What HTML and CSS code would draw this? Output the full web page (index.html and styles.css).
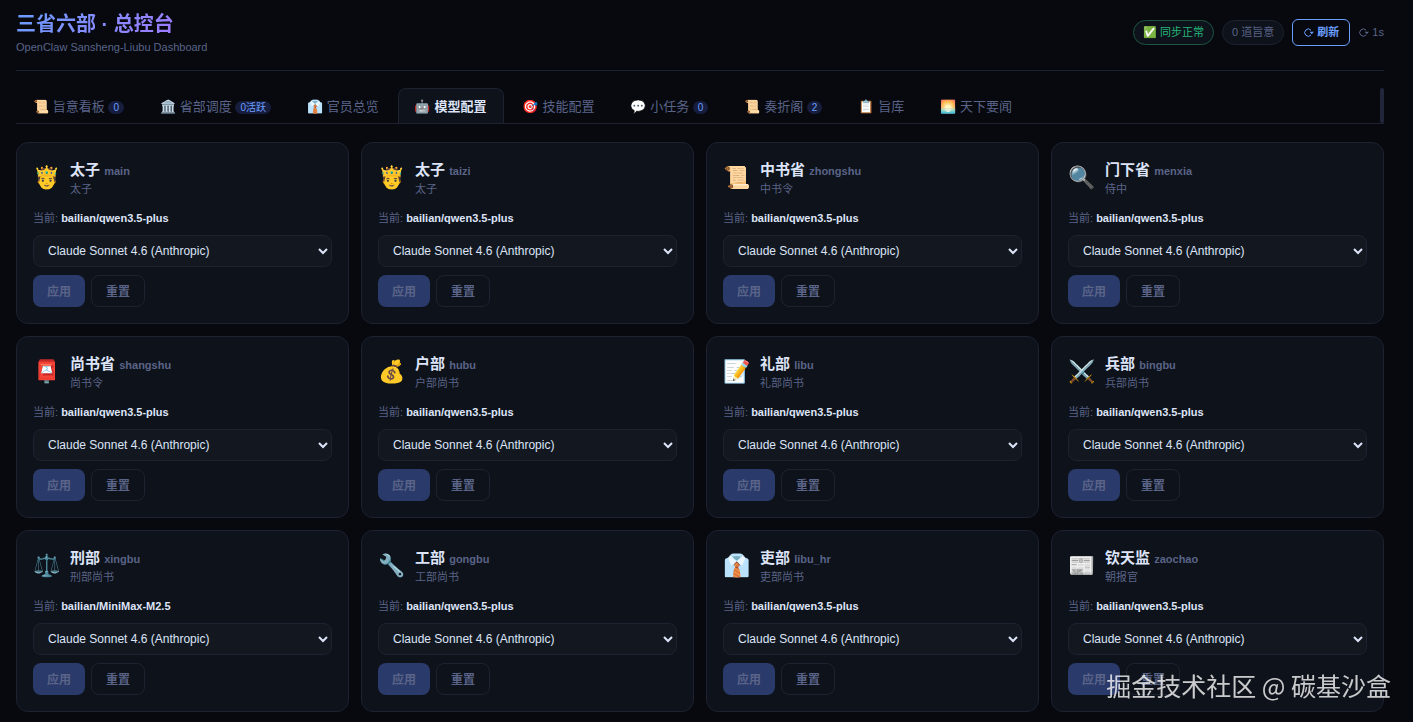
FILE: index.html
```html
<!DOCTYPE html>
<html lang="zh-CN">
<head>
  <meta charset="UTF-8">
  <meta name="viewport" content="width=device-width, initial-scale=1.0">
  <title>三省六部 · 总控台</title>
  <link rel="stylesheet" href="styles.css">
</head>
<body>
  <div class="wrap">
    <header class="hdr">
      <div>
        <h1 class="logo">三省六部 · 总控台</h1>
        <div class="sub-text">OpenClaw Sansheng-Liubu Dashboard</div>
      </div>
      <div class="hdr-r">
        <span class="chip ok">✅ 同步正常</span>
        <span class="chip">0 道旨意</span>
        <button class="btn-refresh" type="button"><svg class="spin" viewBox="0 0 11 11" aria-hidden="true"><path d="M8 3.2A3.6 3.6 0 1 0 8 8"/><path class="tip" d="M6.6 4.8h4.2L8.8 7.2z"/></svg> 刷新</button>
        <span class="countdown"><svg class="spin" viewBox="0 0 11 11" aria-hidden="true"><path d="M8 3.2A3.6 3.6 0 1 0 8 8"/><path class="tip" d="M6.6 4.8h4.2L8.8 7.2z"/></svg> 1s</span>
      </div>
    </header>

    <nav class="tabs">
      <button class="tab" type="button">📜 旨意看板 <span class="tbadge">0</span></button>
      <button class="tab" type="button">🏛️ 省部调度 <span class="tbadge">0活跃</span></button>
      <button class="tab" type="button">👔 官员总览</button>
      <button class="tab active" type="button">🤖 模型配置</button>
      <button class="tab" type="button">🎯 技能配置</button>
      <button class="tab" type="button">💬 小任务 <span class="tbadge">0</span></button>
      <button class="tab" type="button">📜 奏折阁 <span class="tbadge">2</span></button>
      <button class="tab" type="button">📋 旨库</button>
      <button class="tab" type="button">🌅 天下要闻</button>
      <span class="tabs-thumb"></span>
    </nav>

    <main class="model-grid">
      <section class="mc-card">
        <div class="mc-top">
          <span class="mc-emoji">🤴</span>
          <div>
            <h2 class="mc-name">太子 <span class="mc-id">main</span></h2>
            <div class="mc-role">太子</div>
          </div>
        </div>
        <label class="mc-cur" for="sel-main">当前: <b>bailian/qwen3.5-plus</b></label>
        <select class="msel" id="sel-main"><option>Claude Sonnet 4.6 (Anthropic)</option></select>
        <div class="mc-btns">
          <button class="btn btn-p" type="button" disabled>应用</button>
          <button class="btn btn-g" type="button">重置</button>
        </div>
      </section>
      <section class="mc-card">
        <div class="mc-top">
          <span class="mc-emoji">🤴</span>
          <div>
            <h2 class="mc-name">太子 <span class="mc-id">taizi</span></h2>
            <div class="mc-role">太子</div>
          </div>
        </div>
        <label class="mc-cur" for="sel-taizi">当前: <b>bailian/qwen3.5-plus</b></label>
        <select class="msel" id="sel-taizi"><option>Claude Sonnet 4.6 (Anthropic)</option></select>
        <div class="mc-btns">
          <button class="btn btn-p" type="button" disabled>应用</button>
          <button class="btn btn-g" type="button">重置</button>
        </div>
      </section>
      <section class="mc-card">
        <div class="mc-top">
          <span class="mc-emoji">📜</span>
          <div>
            <h2 class="mc-name">中书省 <span class="mc-id">zhongshu</span></h2>
            <div class="mc-role">中书令</div>
          </div>
        </div>
        <label class="mc-cur" for="sel-zhongshu">当前: <b>bailian/qwen3.5-plus</b></label>
        <select class="msel" id="sel-zhongshu"><option>Claude Sonnet 4.6 (Anthropic)</option></select>
        <div class="mc-btns">
          <button class="btn btn-p" type="button" disabled>应用</button>
          <button class="btn btn-g" type="button">重置</button>
        </div>
      </section>
      <section class="mc-card">
        <div class="mc-top">
          <span class="mc-emoji">🔍</span>
          <div>
            <h2 class="mc-name">门下省 <span class="mc-id">menxia</span></h2>
            <div class="mc-role">侍中</div>
          </div>
        </div>
        <label class="mc-cur" for="sel-menxia">当前: <b>bailian/qwen3.5-plus</b></label>
        <select class="msel" id="sel-menxia"><option>Claude Sonnet 4.6 (Anthropic)</option></select>
        <div class="mc-btns">
          <button class="btn btn-p" type="button" disabled>应用</button>
          <button class="btn btn-g" type="button">重置</button>
        </div>
      </section>
      <section class="mc-card">
        <div class="mc-top">
          <span class="mc-emoji">📮</span>
          <div>
            <h2 class="mc-name">尚书省 <span class="mc-id">shangshu</span></h2>
            <div class="mc-role">尚书令</div>
          </div>
        </div>
        <label class="mc-cur" for="sel-shangshu">当前: <b>bailian/qwen3.5-plus</b></label>
        <select class="msel" id="sel-shangshu"><option>Claude Sonnet 4.6 (Anthropic)</option></select>
        <div class="mc-btns">
          <button class="btn btn-p" type="button" disabled>应用</button>
          <button class="btn btn-g" type="button">重置</button>
        </div>
      </section>
      <section class="mc-card">
        <div class="mc-top">
          <span class="mc-emoji">💰</span>
          <div>
            <h2 class="mc-name">户部 <span class="mc-id">hubu</span></h2>
            <div class="mc-role">户部尚书</div>
          </div>
        </div>
        <label class="mc-cur" for="sel-hubu">当前: <b>bailian/qwen3.5-plus</b></label>
        <select class="msel" id="sel-hubu"><option>Claude Sonnet 4.6 (Anthropic)</option></select>
        <div class="mc-btns">
          <button class="btn btn-p" type="button" disabled>应用</button>
          <button class="btn btn-g" type="button">重置</button>
        </div>
      </section>
      <section class="mc-card">
        <div class="mc-top">
          <span class="mc-emoji">📝</span>
          <div>
            <h2 class="mc-name">礼部 <span class="mc-id">libu</span></h2>
            <div class="mc-role">礼部尚书</div>
          </div>
        </div>
        <label class="mc-cur" for="sel-libu">当前: <b>bailian/qwen3.5-plus</b></label>
        <select class="msel" id="sel-libu"><option>Claude Sonnet 4.6 (Anthropic)</option></select>
        <div class="mc-btns">
          <button class="btn btn-p" type="button" disabled>应用</button>
          <button class="btn btn-g" type="button">重置</button>
        </div>
      </section>
      <section class="mc-card">
        <div class="mc-top">
          <span class="mc-emoji">⚔️</span>
          <div>
            <h2 class="mc-name">兵部 <span class="mc-id">bingbu</span></h2>
            <div class="mc-role">兵部尚书</div>
          </div>
        </div>
        <label class="mc-cur" for="sel-bingbu">当前: <b>bailian/qwen3.5-plus</b></label>
        <select class="msel" id="sel-bingbu"><option>Claude Sonnet 4.6 (Anthropic)</option></select>
        <div class="mc-btns">
          <button class="btn btn-p" type="button" disabled>应用</button>
          <button class="btn btn-g" type="button">重置</button>
        </div>
      </section>
      <section class="mc-card">
        <div class="mc-top">
          <span class="mc-emoji">⚖️</span>
          <div>
            <h2 class="mc-name">刑部 <span class="mc-id">xingbu</span></h2>
            <div class="mc-role">刑部尚书</div>
          </div>
        </div>
        <label class="mc-cur" for="sel-xingbu">当前: <b>bailian/MiniMax-M2.5</b></label>
        <select class="msel" id="sel-xingbu"><option>Claude Sonnet 4.6 (Anthropic)</option></select>
        <div class="mc-btns">
          <button class="btn btn-p" type="button" disabled>应用</button>
          <button class="btn btn-g" type="button">重置</button>
        </div>
      </section>
      <section class="mc-card">
        <div class="mc-top">
          <span class="mc-emoji">🔧</span>
          <div>
            <h2 class="mc-name">工部 <span class="mc-id">gongbu</span></h2>
            <div class="mc-role">工部尚书</div>
          </div>
        </div>
        <label class="mc-cur" for="sel-gongbu">当前: <b>bailian/qwen3.5-plus</b></label>
        <select class="msel" id="sel-gongbu"><option>Claude Sonnet 4.6 (Anthropic)</option></select>
        <div class="mc-btns">
          <button class="btn btn-p" type="button" disabled>应用</button>
          <button class="btn btn-g" type="button">重置</button>
        </div>
      </section>
      <section class="mc-card">
        <div class="mc-top">
          <span class="mc-emoji">👔</span>
          <div>
            <h2 class="mc-name">吏部 <span class="mc-id">libu_hr</span></h2>
            <div class="mc-role">吏部尚书</div>
          </div>
        </div>
        <label class="mc-cur" for="sel-libu-hr">当前: <b>bailian/qwen3.5-plus</b></label>
        <select class="msel" id="sel-libu-hr"><option>Claude Sonnet 4.6 (Anthropic)</option></select>
        <div class="mc-btns">
          <button class="btn btn-p" type="button" disabled>应用</button>
          <button class="btn btn-g" type="button">重置</button>
        </div>
      </section>
      <section class="mc-card">
        <div class="mc-top">
          <span class="mc-emoji">📰</span>
          <div>
            <h2 class="mc-name">钦天监 <span class="mc-id">zaochao</span></h2>
            <div class="mc-role">朝报官</div>
          </div>
        </div>
        <label class="mc-cur" for="sel-zaochao">当前: <b>bailian/qwen3.5-plus</b></label>
        <select class="msel" id="sel-zaochao"><option>Claude Sonnet 4.6 (Anthropic)</option></select>
        <div class="mc-btns">
          <button class="btn btn-p" type="button" disabled>应用</button>
          <button class="btn btn-g" type="button">重置</button>
        </div>
      </section>
    </main>
  </div>
  <div class="watermark">掘金技术社区 @ 碳基沙盒</div>
</body>
</html>
```
FILE: styles.css
```css
:root {
  --bg: #07090f;
  --panel: #0e121a;
  --panel2: #131820;
  --line: #1c2230;
  --text: #dde4f8;
  --muted: #5a6488;
  --acc: #6a9eff;
  --acc2: #a07aff;
  --ok: #25b57a;
}
* {
  margin: 0;
  padding: 0;
  box-sizing: border-box;
}
body {
  font-family: "Liberation Sans", "Noto Sans CJK SC", "Noto Color Emoji", sans-serif;
  font-size: 13px;
  background: var(--bg);
  color: var(--text);
}
button, select {
  font-family: inherit;
  cursor: pointer;
}
.wrap {
  padding: 9px 29px 10px 16px;
}

/* Header */
.hdr {
  display: flex;
  align-items: center;
  justify-content: space-between;
  padding-bottom: 15px;
  border-bottom: 1px solid var(--line);
  margin-bottom: 17px;
}
.logo {
  width: fit-content;
  font-size: 20px;
  line-height: 30px;
  font-weight: 700;
  background: linear-gradient(135deg, var(--acc), var(--acc2));
  -webkit-background-clip: text;
  background-clip: text;
  color: transparent;
}
.sub-text {
  font-size: 11px;
  line-height: 16px;
  color: var(--muted);
}
.hdr-r {
  display: flex;
  align-items: center;
  gap: 8px;
}
.chip {
  padding: 4px 9px;
  border: 1px solid var(--line);
  border-radius: 999px;
  background: var(--panel);
  font-size: 11px;
  line-height: 15px;
  color: var(--muted);
}
.chip.ok {
  border-color: #1c5540;
  color: var(--ok);
}
.btn-refresh {
  padding: 5px 10px;
  border: 1px solid var(--acc);
  border-radius: 6px;
  background: transparent;
  font-size: 11px;
  line-height: 15px;
  font-weight: 600;
  color: var(--acc);
}
.countdown {
  font-size: 11px;
  line-height: 15px;
  color: var(--muted);
}
.spin {
  width: 11px;
  height: 11px;
  vertical-align: -2px;
  fill: none;
  stroke: currentColor;
}
.spin .tip {
  fill: currentColor;
  stroke: none;
}

/* Tabs */
.tabs {
  display: flex;
  gap: 2px;
  border-bottom: 1px solid var(--line);
  margin-bottom: 18px;
}
.tab {
  height: 35px;
  padding: 2px 16px 0;
  border: 1px solid transparent;
  border-bottom: none;
  border-radius: 8px 8px 0 0;
  background: transparent;
  font-size: 13px;
  line-height: 20px;
  white-space: nowrap;
  color: var(--muted);
}
.tab.active {
  border-color: var(--line);
  background: var(--panel);
  font-weight: 700;
  color: var(--text);
}
.tbadge {
  padding: 1px 5px;
  border-radius: 999px;
  background: #171d3d;
  font-size: 10px;
  line-height: 1;
  color: var(--acc);
}
.tabs-thumb {
  width: 4px;
  margin-left: auto;
  border-radius: 2px;
  background: #22263a;
}

/* Model cards */
.model-grid {
  display: grid;
  grid-template-columns: repeat(auto-fill, minmax(290px, 1fr));
  gap: 12px;
}
.mc-card {
  padding: 16px;
  border: 1px solid var(--line);
  border-radius: 12px;
  background: var(--panel);
}
.mc-top {
  display: flex;
  align-items: center;
  gap: 10px;
  margin-bottom: 12px;
}
.mc-emoji {
  width: 27px;
  font-size: 22px;
  line-height: 38px;
}
.mc-name {
  font-size: 15px;
  line-height: 22px;
  font-weight: 700;
}
.mc-id {
  font-size: 11px;
  line-height: 1;
  color: var(--muted);
}
.mc-role {
  font-size: 11px;
  line-height: 16px;
  color: var(--muted);
}
.mc-cur {
  display: block;
  margin-bottom: 8px;
  font-size: 11px;
  line-height: 18px;
  color: var(--muted);
}
.mc-cur b {
  color: var(--text);
}
.msel {
  display: block;
  width: 100%;
  height: 32px;
  padding: 0 10px;
  border: 1px solid var(--line);
  border-radius: 8px;
  background: var(--panel2);
  font-size: 12px;
  color: var(--text);
}
.mc-btns {
  display: flex;
  gap: 6px;
  margin-top: 8px;
}
.btn {
  height: 32px;
  padding: 0 14px 2px;
  border: 1px solid transparent;
  border-radius: 8px;
  font-size: 12px;
  font-weight: 700;
  color: var(--muted);
}
.btn-p {
  background: #2a3a6a;
  border: none;
}
.btn-g {
  border-color: var(--line);
  background: transparent;
}

.watermark {
  position: fixed;
  right: 22px;
  bottom: 19px;
  font-family: "Noto Sans CJK SC", sans-serif;
  font-size: 25px;
  line-height: 36px;
  color: rgba(255, 255, 255, 0.78);
  pointer-events: none;
}
```
